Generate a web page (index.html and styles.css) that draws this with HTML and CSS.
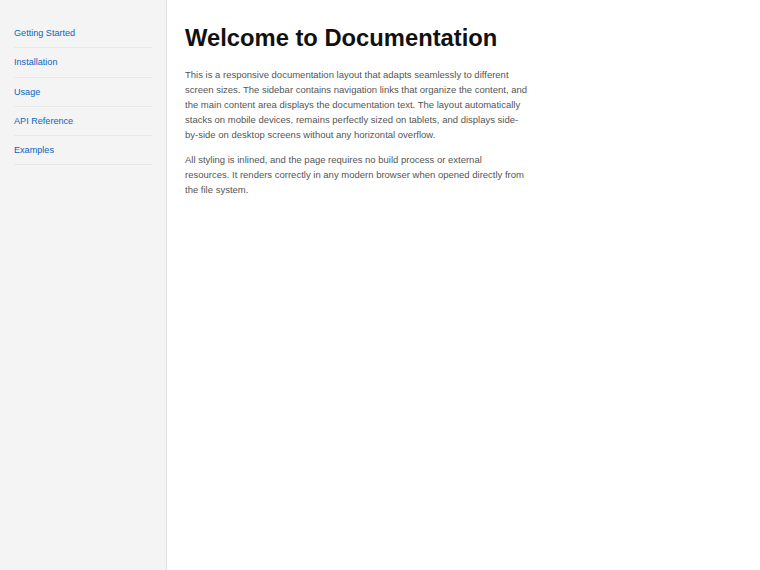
FILE: index.html
```html
<!DOCTYPE html>
<html lang="en">
<head>
<meta charset="utf-8">
<title>Documentation</title>
<link rel="stylesheet" href="styles.css">
</head>
<body>
<div class="layout">
  <nav class="sidebar">
    <ul class="nav">
      <li><a href="#">Getting Started</a></li>
      <li><a href="#">Installation</a></li>
      <li><a href="#">Usage</a></li>
      <li><a href="#">API Reference</a></li>
      <li><a href="#">Examples</a></li>
    </ul>
  </nav>
  <main class="content">
    <h1>Welcome to Documentation</h1>
    <p>This is a responsive documentation layout that adapts seamlessly to different screen sizes. The sidebar contains navigation links that organize the content, and the main content area displays the documentation text. The layout automatically stacks on mobile devices, remains perfectly sized on tablets, and displays side-by-side on desktop screens without any horizontal overflow.</p>
    <p>All styling is inlined, and the page requires no build process or external resources. It renders correctly in any modern browser when opened directly from the file system.</p>
  </main>
</div>
</body>
</html>
```

FILE: styles.css
```css
html, body {
  margin: 0;
  padding: 0;
  height: 100%;
}
body {
  font-family: "Liberation Sans", Arial, sans-serif;
  background: #fff;
}
.layout {
  display: flex;
  min-height: 100%;
}
.sidebar {
  width: 167px;
  flex-shrink: 0;
  background: #f4f4f4;
  border-right: 1px solid #e0e0e0;
  padding: 19px 14px 0 14px;
  box-sizing: border-box;
}
.nav {
  list-style: none;
  margin: 0;
  padding: 0;
}
.nav li {
  border-bottom: 1px solid #e8e8e8;
}
.nav a {
  display: block;
  padding: 8px 0 8.25px;
  font-size: 9.1px;
  line-height: 12px;
  color: #0a64c0;
  text-decoration: none;
}
.content {
  padding: 20px 18px;
  width: 343px;
}
h1 {
  margin: 0 0 11px;
  font-size: 23.75px;
  line-height: 36px;
  font-weight: bold;
  color: #111;
}
p {
  margin: 0 0 10px;
  font-size: 9.5px;
  line-height: 15px;
  color: #555;
}
```
